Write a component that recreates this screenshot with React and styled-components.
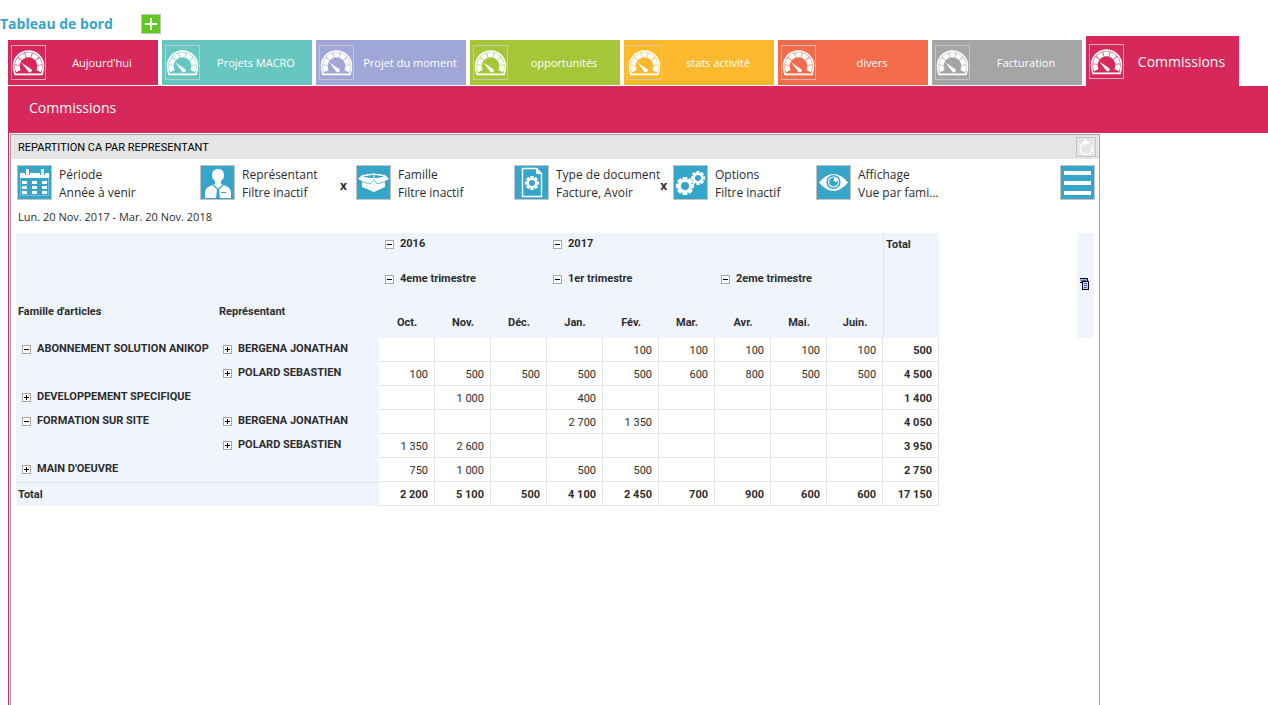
import React, { useState } from "react";
import styled, { createGlobalStyle } from "styled-components";

const Colors = {
  pink: "#d6285a",
  blue: "#36a5ca",
  green: "#5fc91f",
  header: "#f0f5fd",
  line: "#e3e3e3",
  frame: "#a5a5a5",
  iconBorder: "#c3c3c3",
  text: "#2d2d2d",
};

const tabs = [
  { name: "Aujourd'hui", color: "#d6285a" },
  { name: "Projets MACRO", color: "#68c6c0" },
  { name: "Projet du moment", color: "#a0a7d6" },
  { name: "opportunités", color: "#a5c639" },
  { name: "stats activité", color: "#fdb92d" },
  { name: "divers", color: "#f26c4c" },
  { name: "Facturation", color: "#a5a5a5" },
  { name: "Commissions", color: "#d6285a" },
];

const months = ["Oct.", "Nov.", "Déc.", "Jan.", "Fév.", "Mar.", "Avr.", "Mai.", "Juin."];

const rows = [
  { family: "ABONNEMENT SOLUTION ANIKOP", open: true, rep: "BERGENA JONATHAN", values: ["", "", "", "", "100", "100", "100", "100", "100"], total: "500" },
  { rep: "POLARD SEBASTIEN", values: ["100", "500", "500", "500", "500", "600", "800", "500", "500"], total: "4 500" },
  { family: "DEVELOPPEMENT SPECIFIQUE", values: ["", "1 000", "", "400", "", "", "", "", ""], total: "1 400" },
  { family: "FORMATION SUR SITE", open: true, rep: "BERGENA JONATHAN", values: ["", "", "", "2 700", "1 350", "", "", "", ""], total: "4 050" },
  { rep: "POLARD SEBASTIEN", values: ["1 350", "2 600", "", "", "", "", "", "", ""], total: "3 950" },
  { family: "MAIN D'OEUVRE", values: ["750", "1 000", "", "500", "500", "", "", "", ""], total: "2 750" },
];

const totals = ["2 200", "5 100", "500", "4 100", "2 450", "700", "900", "600", "600"];

const GaugeIcon = () => (
  <svg viewBox="1 1 33 33" width="33" height="33" fill="none" stroke="#fff">
    <path d="M4 29.3Q2.6 25.500 2.600 21A14.900 14.900 0 0 1 32.400 21Q32.400 25.500 31 29.300Z" strokeWidth="1.700" />
    <path d="M7.400 26.200A11.300 11.300 0 1 1 27.600 26.200" pathLength="69" strokeWidth="5" strokeDasharray="9 1" />
    <path d="M10.300 17.500L20.400 24.200A2 2 0 0 1 17.600 27Z" fill="#fff" stroke="none" />
  </svg>
);

const CalendarIcon = () => (
  <svg viewBox="0 0 33 33" width="33" height="33" fill="#fff">
    <path d="M2 7H31V12H2Z" />
    <path d="M7 3h5v6H7zM22 3h5v6h-5z" fill={Colors.blue} />
    <path d="M8 3h3v6H8zM23 3h3v6h-3z" />
    <path d="M2.500 12V29.500H30.500V12" fill="none" stroke="#fff" strokeOpacity=".3" strokeWidth="1" />
    {[15, 20, 25].map((y) => [4, 14, 24].map((x) => <rect key={`${x}-${y}`} x={x} y={y} width="5" height="3" />))}
  </svg>
);

const PersonIcon = () => (
  <svg viewBox="0 0 33 33" width="33" height="33">
    <path d="M4 32V27Q4 22 9 20L14 18V15Q11 13 11 9Q11 3 17 3T23 9Q23 13 20 15V18L25 20Q30 22 30 27V32Z" fill="#fff" />
    <path d="M12 19L17 23.500L22 19" fill="none" stroke={Colors.blue} strokeWidth="1.200" />
    <path d="M16 23h2l1 9h-4zM20 26h5v1h-5z" fill={Colors.blue} />
  </svg>
);

const BoxIcon = () => (
  <svg viewBox="0 0 33 33" width="33" height="33">
    <path d="M5 9L17 7.500L28 9L32 13L28 15V21L17 26L5 21V15L1 13Z" fill="#fff" />
    <path d="M6 10.500Q17 7 27 10.500Q17 14 6 10.500Z" fill={Colors.blue} />
    <path d="M7 9.500Q17 7 26 9.500M17 8V13" fill="none" stroke="#fff" strokeWidth="1" />
    <path d="M5 15.500L13 18L17 13.500L20 18L28 15.500" fill="none" stroke={Colors.blue} strokeWidth=".7" />
  </svg>
);

const gearTeeth = [0, 45, 90, 135];

const Gear = ({ x, y, r, hole }) => (
  <g transform={`translate(${x} ${y})`}>
    <circle r={r} fill="#fff" />
    {gearTeeth.map((a) => (
      <rect key={a} x={-r / 3} y={-r - 2} width={(r * 2) / 3} height={2 * r + 4} fill="#fff" transform={`rotate(${a})`} />
    ))}
    <circle r={hole} fill={Colors.blue} />
  </g>
);

const DocumentIcon = () => (
  <svg viewBox="0 0 33 33" width="33" height="33">
    <path d="M7.500 2.500H21.500L26.500 7.500V30.500H7.500Z" fill="none" stroke="#fff" strokeWidth="1.500" />
    <path d="M21 2V8H27Z" fill="#fff" />
    <Gear x={17} y={17} r={5} hole={3} />
  </svg>
);

const GearsIcon = () => (
  <svg viewBox="0 0 33 33" width="33" height="33">
    <Gear x={11} y={20} r={7} hole={4} />
    <Gear x={24} y={12} r={5} hole={3} />
  </svg>
);

const EyeIcon = () => (
  <svg viewBox="0 0 33 33" width="33" height="33">
    <path d="M2 16.500Q9 8 16.500 8T31 16.500Q24 25 16.500 25T2 16.500Z" fill="#fff" />
    <circle cx="16.500" cy="16" r="6.300" fill="#fff" stroke={Colors.blue} strokeWidth="1.600" />
    <circle cx="16.500" cy="16" r="4.400" fill={Colors.blue} />
    <circle cx="18.500" cy="13.800" r="2" fill="#fff" />
  </svg>
);

const MenuIcon = () => (
  <svg viewBox="0 0 33 33" width="33" height="33" fill="#fff">
    <path d="M3 5h27v4H3zM3 15h27v4H3zM3 25h27v4H3z" />
  </svg>
);

const RefreshIcon = () => (
  <svg viewBox="0 0 18 18" width="18" height="18">
    <path d="M14.800 7.500A6.200 6.200 0 1 1 8 4.300" fill="none" stroke="#fff" strokeWidth="1.500" />
    <path d="M7 1L13 4.200L7 7.500Z" fill="#fff" />
  </svg>
);

const FieldsIcon = () => (
  <svg viewBox="0 0 9 12" width="9" height="12" shapeRendering="crispEdges">
    <path d="M0 0h8v5H0z" fill="#000" />
    <path d="M0 1h7v3H0z" fill="#a9bdf5" />
    <path d="M1 2h5v1H1z" fill="#3f5fc8" />
    <path d="M2 3h7v9H2z" fill="#000" />
    <path d="M3 4h5v7H3z" fill="#c5d3fb" />
    <path d="M4 5h3v1H4zM4 7h3v1H4zM4 9h3v1H4z" fill="#3f5fc8" />
  </svg>
);

const filters = [
  { label: "Période", value: "Année à venir", icon: <CalendarIcon /> },
  { label: "Représentant", value: "Filtre inactif", icon: <PersonIcon />, clear: true },
  { label: "Famille", value: "Filtre inactif", icon: <BoxIcon /> },
  { label: "Type de document", value: "Facture, Avoir", icon: <DocumentIcon />, clear: true },
  { label: "Options", value: "Filtre inactif", icon: <GearsIcon /> },
  { label: "Affichage", value: "Vue par fami...", icon: <EyeIcon /> },
];

const Toggle = ({ open, name }) => (
  <ToggleBtn type="button" aria-label={name} aria-expanded={!!open}>
    <svg viewBox="0 0 7 7" width="7" height="7" shapeRendering="crispEdges">
      <path d={open ? "M1 3h5v1H1z" : "M1 3h5v1H1zM3 1h1v5H3z"} fill="#000" />
    </svg>
  </ToggleBtn>
);

const Group = ({ open, children }) => (
  <GroupLabel>
    <Toggle open={open} name={children} />
    {children}
  </GroupLabel>
);

const App = () => {
  const [active, setActive] = useState("Commissions");

  return (
    <Page>
      <GlobalStyle />
      <TopBar>
        <Title>Tableau de bord</Title>
        <AddBtn type="button" aria-label="Ajouter">
          <svg viewBox="0 0 18 18" width="18" height="18" fill="#fff">
            <path d="M8 3h2v5h5v2h-5v5H8v-5H3V8h5z" />
          </svg>
        </AddBtn>
      </TopBar>
      <Tabs>
        {tabs.map((tab) => (
          <Tab key={tab.name} type="button" $color={tab.color} $active={tab.name === active} onClick={() => setActive(tab.name)}>
            <TabIcon><GaugeIcon /></TabIcon>
            <TabName>{tab.name}</TabName>
          </Tab>
        ))}
      </Tabs>
      <Banner>{active}</Banner>
      <Content>
        <Panel>
          <PanelHeader>
            <PanelTitle>REPARTITION CA PAR REPRESENTANT</PanelTitle>
            <RefreshBtn type="button" aria-label="Actualiser"><RefreshIcon /></RefreshBtn>
          </PanelHeader>
          <Toolbar>
            {filters.map((filter) => (
              <Filter key={filter.label}>
                <IconBtn type="button" aria-label={filter.label}>{filter.icon}</IconBtn>
                <FilterText>
                  <div>{filter.label}</div>
                  <div>{filter.value}</div>
                </FilterText>
                {filter.clear && <ClearBtn type="button">x</ClearBtn>}
              </Filter>
            ))}
            <IconBtn type="button" aria-label="Menu"><MenuIcon /></IconBtn>
          </Toolbar>
          <Dates>Lun. 20 Nov. 2017 - Mar. 20 Nov. 2018</Dates>
          <TableArea>
            <Table>
              <colgroup>
                <Col $width={201} />
                <Col $width={162} />
                {months.map((month) => <Col key={month} $width={56} />)}
                <Col $width={56} />
              </colgroup>
              <thead>
                <HeadRow>
                  <HeadCell colSpan={2} rowSpan={2} />
                  <HeadCell colSpan={3}><Group open>2016</Group></HeadCell>
                  <HeadCell colSpan={6}><Group open>2017</Group></HeadCell>
                  <TotalHead rowSpan={3}>Total</TotalHead>
                </HeadRow>
                <HeadRow>
                  <HeadCell colSpan={3}><Group open>4eme trimestre</Group></HeadCell>
                  <HeadCell colSpan={3}><Group open>1er trimestre</Group></HeadCell>
                  <HeadCell colSpan={3}><Group open>2eme trimestre</Group></HeadCell>
                </HeadRow>
                <HeadRow>
                  <FieldHead>Famille d'articles</FieldHead>
                  <FieldHead>Représentant</FieldHead>
                  {months.map((month) => <MonthHead key={month}>{month}</MonthHead>)}
                </HeadRow>
              </thead>
              <tbody>
                {rows.map((row, i) => (
                  <tr key={i}>
                    <RowHead>{row.family && <Group open={row.open}>{row.family}</Group>}</RowHead>
                    <RowHead>{row.rep && <Group>{row.rep}</Group>}</RowHead>
                    {row.values.map((value, j) => <Cell key={j}>{value}</Cell>)}
                    <Cell $bold>{row.total}</Cell>
                  </tr>
                ))}
              </tbody>
              <tfoot>
                <tr>
                  <TotalRowHead colSpan={2}>Total</TotalRowHead>
                  {totals.map((value, i) => <Cell key={i} $bold>{value}</Cell>)}
                  <Cell $bold>17 150</Cell>
                </tr>
              </tfoot>
            </Table>
            <SideStrip>
              <FieldsBtn type="button" aria-label="Champs"><FieldsIcon /></FieldsBtn>
            </SideStrip>
          </TableArea>
        </Panel>
      </Content>
    </Page>
  );
};

export default App;

/* Styles */

const GlobalStyle = createGlobalStyle`
  * {
    box-sizing: border-box;
  }

  body {
    margin: 0;
    background: #fff;
    color: ${Colors.text};
    font-family: 'Open Sans', 'Noto Sans', sans-serif;
    font-size: 12px;
  }

  button {
    padding: 0;
    border: 0;
    background: none;
    color: inherit;
    font: inherit;
    cursor: pointer;
  }

  svg {
    display: block;
  }
`;

const Page = styled.div`
  display: flex;
  flex-direction: column;
  min-height: 100vh;
`;

const TopBar = styled.header`
  display: flex;
  align-items: center;
  gap: 28px;
  height: 36px;
  padding-top: 12px;
`;

const Title = styled.h1`
  margin: 0;
  color: ${Colors.blue};
  font-size: 14px;
  line-height: 20px;
`;

const AddBtn = styled.button`
  border: 1px solid ${Colors.iconBorder};
  background: ${Colors.green};
`;

const Tabs = styled.nav`
  display: flex;
  align-items: flex-start;
  gap: 4px;
  height: 50px;
  margin-left: 8px;
`;

const Tab = styled.button`
  display: flex;
  align-items: center;
  width: ${(props) => props.$active ? '153px' : '150px'};
  height: ${(props) => props.$active ? '50px' : '45px'};
  margin-top: ${(props) => props.$active ? '0' : '4px'};
  padding-left: 3px;
  background: ${(props) => props.$color};
  color: #fff;
  font-size: ${(props) => props.$active ? '14px' : '11px'};
`;

const TabIcon = styled.span`
  flex: none;
  border: 1px solid rgba(205, 205, 205, .8);
`;

const TabName = styled.span`
  flex: 1;
  text-align: center;
  white-space: nowrap;
`;

const Banner = styled.div`
  height: 47px;
  margin-left: 8px;
  padding-left: 21px;
  background: ${Colors.pink};
  color: #fff;
  font-size: 14px;
  line-height: 44px;
`;

const Content = styled.main`
  display: flex;
  flex: 1;
  margin-left: 8px;
  padding: 1px 0 0 1px;
  border-left: 1px solid ${Colors.pink};
`;

const Panel = styled.section`
  width: 100%;
  max-width: 1090px;
  border: 1px solid ${Colors.frame};
  border-bottom: 0;
`;

const PanelHeader = styled.div`
  display: flex;
  align-items: center;
  justify-content: space-between;
  height: 24px;
  padding: 0 3px 0 7px;
  background: #e5e5e5;
`;

const PanelTitle = styled.h2`
  margin: 0;
  color: #000;
  font-family: Roboto, sans-serif;
  font-size: 11px;
  font-weight: 400;
`;

const RefreshBtn = styled.button`
  border: 1px solid ${Colors.iconBorder};
`;

const Toolbar = styled.div`
  display: grid;
  grid-template-columns: 183px 156px 158px 159px 143px 1fr auto;
  align-items: start;
  padding: 6px 4px 0 6px;
`;

const Filter = styled.div`
  display: flex;
  align-items: flex-start;
  padding-right: 9px;
`;

const IconBtn = styled.button`
  flex: none;
  border: 1px solid ${Colors.iconBorder};
  background: ${Colors.blue};
`;

const FilterText = styled.div`
  padding-top: 1px;
  margin-left: 7px;
  line-height: 18px;
  white-space: nowrap;
`;

const ClearBtn = styled.button`
  margin-top: 12px;
  margin-left: auto;
  font-weight: 700;
`;

const Dates = styled.div`
  padding: 6px 7px 7px;
  font-size: 11px;
  line-height: 18px;
`;

const TableArea = styled.div`
  display: flex;
  align-items: flex-start;
  justify-content: space-between;
  padding: 0 5px;
`;

const Table = styled.table`
  table-layout: fixed;
  width: 923px;
  border-collapse: separate;
  border-spacing: 0;
  font-family: Roboto, sans-serif;
  font-size: 11px;
  line-height: 18px;

  th, td {
    padding: 0;
    white-space: nowrap;
  }

  th {
    background: ${Colors.header};
    text-align: left;
    vertical-align: top;
  }
`;

const Col = styled.col`
  width: ${(props) => props.$width}px;
`;

const HeadRow = styled.tr`
  height: 35px;
`;

const HeadCell = styled.th`
  && {
    padding-top: 2px;
  }
`;

const TotalHead = styled.th`
  border-left: 1px solid ${Colors.line};

  && {
    padding: 3px 2px;
  }
`;

const FieldHead = styled.th`
  && {
    padding-left: 2px;
  }
`;

const MonthHead = styled.th`
  && {
    padding-top: 11px;
    text-align: center;
  }
`;

const RowHead = styled.th`
  && {
    padding-top: 2px;
  }
`;

const TotalRowHead = styled.th`
  border-top: 1px solid ${Colors.line};

  && {
    padding: 3px 2px 2px;
  }
`;

const Cell = styled.td`
  height: 24px;
  border-right: 1px solid ${Colors.line};
  border-bottom: 1px solid ${Colors.line};
  font-weight: ${(props) => props.$bold ? 700 : 400};
  text-align: right;

  && {
    padding-top: 2px;
    padding-right: 6px;
  }
`;

const GroupLabel = styled.div`
  display: flex;
  align-items: center;
  gap: 6px;
  padding-left: 6px;
`;

const ToggleBtn = styled.button`
  flex: none;
  border: 1px solid #aca899;
  background: #fff;
`;

const SideStrip = styled.aside`
  display: flex;
  align-items: center;
  width: 17px;
  height: 105px;
  padding: 0 0 3px 3px;
  background: ${Colors.header};
`;

const FieldsBtn = styled.button`
  flex: none;
`;
